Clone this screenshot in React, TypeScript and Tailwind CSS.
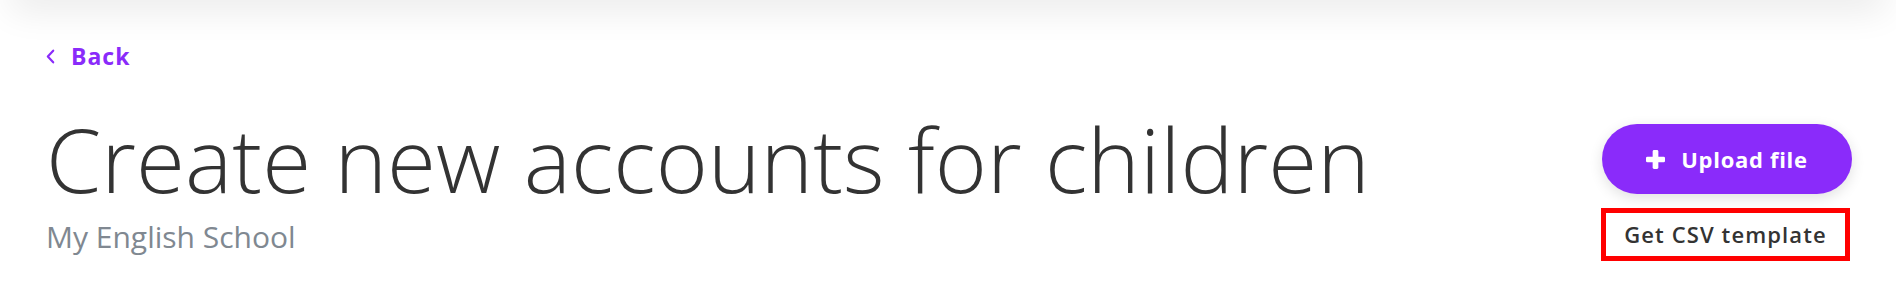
import React from "react";

export default function App() {
    return (
        <div className="min-h-[300px] bg-white overflow-hidden" style={{ fontFamily: "'Open Sans', 'Noto Sans', sans-serif" }}>
            <div className="mx-[20px] h-[14px] -mt-[14px] shadow-[0_0_36px_10px_rgba(0,0,0,0.09)]" />

            <div className="pl-[46px] pr-[44px]">
                <a href="#" className="mt-[42px] flex items-center gap-[16px] text-[#8a2bfa] text-[23px] font-bold leading-[28px] tracking-[1px]">
                    <svg viewBox="0 0 10 16" className="h-[15px] w-[9px]" fill="none" stroke="currentColor" strokeWidth="2.4" strokeLinecap="round" strokeLinejoin="round">
                        <polyline points="8,1.5 2,8 8,14.5" />
                    </svg>
                    <span>Back</span>
                </a>

                <div className="mt-[41px] flex justify-between items-start">
                    <div>
                        <h1 className="text-[89px] font-light leading-[96px] text-[#333333] tracking-[0.1px]">
                            Create new accounts for children
                        </h1>
                        <p className="mt-[12px] text-[30px] leading-[36px] text-[#808891]">My English School</p>
                    </div>

                    <div className="mt-[13px] flex flex-col items-end gap-[14px]">
                        <button className="flex items-center justify-center gap-[16px] w-[250px] h-[70px] rounded-full bg-[#8a2bfa] text-white text-[22px] font-bold tracking-[0.7px] shadow-[0_4px_14px_rgba(0,0,0,0.12)]">
                            <svg viewBox="0 0 20 20" className="h-[19px] w-[19px]" fill="currentColor">
                                <rect x="7" y="0" width="6" height="20" rx="1.5" />
                                <rect x="0" y="7" width="20" height="6" rx="1.5" />
                            </svg>
                            <span>Upload file</span>
                        </button>
                        <button className="mr-[2px] w-[249px] h-[53px] border-[5px] border-[#ff0000] text-[22px] font-semibold text-[#333333] tracking-[1.1px]">
                            Get CSV template
                        </button>
                    </div>
                </div>
            </div>
        </div>
    );
}
